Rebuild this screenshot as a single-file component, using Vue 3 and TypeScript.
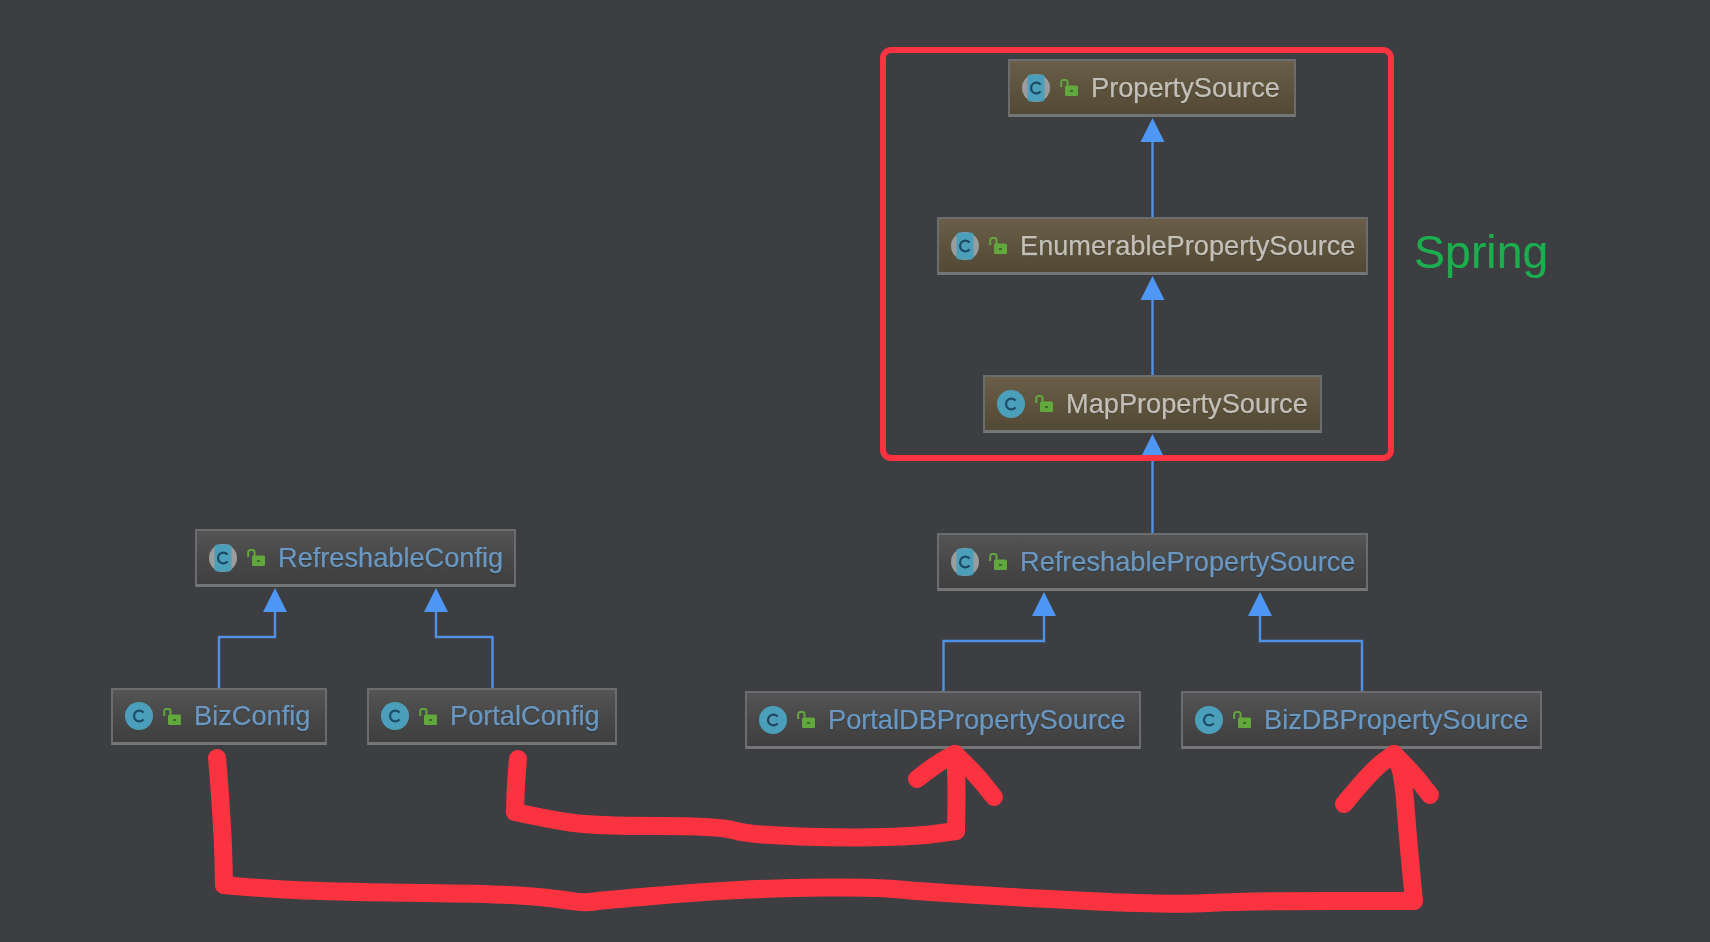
<script setup lang="ts">
interface DiagramNode {
  name: string
  x: number
  y: number
  w: number
  h: number
  abstract: boolean
  library: boolean
}

type Point = [number, number]

const nodes: DiagramNode[] = [
  { name: 'PropertySource', x: 1008, y: 59, w: 288, h: 58, abstract: true, library: true },
  { name: 'EnumerablePropertySource', x: 937, y: 217, w: 431, h: 58, abstract: true, library: true },
  { name: 'MapPropertySource', x: 983, y: 375, w: 339, h: 58, abstract: false, library: true },
  { name: 'RefreshablePropertySource', x: 937, y: 533, w: 431, h: 58, abstract: true, library: false },
  { name: 'RefreshableConfig', x: 195, y: 529, w: 321, h: 58, abstract: true, library: false },
  { name: 'BizConfig', x: 111, y: 688, w: 216, h: 57, abstract: false, library: false },
  { name: 'PortalConfig', x: 367, y: 688, w: 250, h: 57, abstract: false, library: false },
  { name: 'PortalDBPropertySource', x: 745, y: 691, w: 396, h: 58, abstract: false, library: false },
  { name: 'BizDBPropertySource', x: 1181, y: 691, w: 361, h: 58, abstract: false, library: false },
]

const edges: string[] = [
  'M1152.500 142V217',
  'M1152.500 300V375',
  'M1152.500 458V533',
  'M275 611V637H219V688',
  'M436 611V637H492.500V688',
  'M1044 616V641H943.500V691',
  'M1260 616V641H1362V691',
]

const arrows: Point[] = [
  [1152.500, 118],
  [1152.500, 276],
  [1152.500, 434],
  [275, 588],
  [436, 588],
  [1044, 592],
  [1260, 592],
]

const arrowPoints = (a: Point): string =>
  `${a[0]},${a[1]} ${a[0] - 12},${a[1] + 24} ${a[0] + 12},${a[1] + 24}`

const nodeBox = (n: DiagramNode) => ({
  left: `${n.x}px`,
  top: `${n.y}px`,
  width: `${n.w}px`,
  height: `${n.h}px`,
})

// Hand-drawn strokes: smooth between the sampled points, sharp only where one stroke ends.
const smooth = (pts: Point[]): string => {
  let d = `M${pts[0][0]} ${pts[0][1]}`
  for (let i = 1; i < pts.length - 1; i++) {
    const mx = (pts[i][0] + pts[i + 1][0]) / 2
    const my = (pts[i][1] + pts[i + 1][1]) / 2
    d += ` Q${pts[i][0]} ${pts[i][1]} ${mx} ${my}`
  }
  const last = pts[pts.length - 1]
  return `${d} L${last[0]} ${last[1]}`
}

const strokes: string[] = [
  smooth([[217, 758], [218.500, 773], [223, 840], [224, 885]]),
  smooth([
    [224, 885], [266, 889], [343, 892], [506, 894], [560, 899], [583, 903], [606, 900], [700, 892],
    [777, 888], [874, 887], [914, 891], [1008, 897], [1168, 905], [1249, 901], [1414, 901],
  ]),
  smooth([[1414, 901], [1408, 840], [1403, 773], [1394, 754]]),
  smooth([[1344, 804], [1372, 770], [1394, 754]]),
  smooth([[1394, 754], [1412, 772], [1430, 795]]),
  smooth([[518, 759], [516, 780], [515, 812]]),
  smooth([
    [515, 812], [547, 819], [593, 826], [720, 826], [749, 835], [853, 838], [920, 836], [956, 831],
  ]),
  smooth([[956, 831], [957, 790], [955, 754]]),
  smooth([[917, 779], [936, 764], [955, 754]]),
  smooth([[955, 754], [974, 772], [994, 797]]),
]
</script>

<template>
  <div class="canvas">
    <div
      v-for="n in nodes"
      :key="n.name"
      class="node"
      :class="{ library: n.library }"
      :style="nodeBox(n)"
    >
      <svg class="kind" viewBox="0 0 28 28" width="28" height="28">
        <template v-if="n.abstract">
          <circle cx="14" cy="14" r="14" fill="#9a9c9e" />
          <rect x="5.500" y="0.500" width="17" height="27" rx="3" fill="#4b9fba" />
        </template>
        <circle v-else cx="14" cy="14" r="14" fill="#4b9fba" />
        <path
          d="M18.600 10.600A5.400 5.400 0 1 0 18.600 17.400"
          fill="none"
          stroke="#1d4a62"
          stroke-width="2.200"
        />
      </svg>
      <svg class="lock" viewBox="0 0 18 17" width="18" height="17">
        <path d="M1.200 8V3A2 2 0 0 1 3.200 1H5.500A2 2 0 0 1 7.500 3V7" fill="none" stroke="#62a83c" stroke-width="2" />
        <rect x="5" y="6.500" width="13" height="10.500" rx="1.500" fill="#62a83c" />
        <rect x="10" y="11" width="3" height="2" fill="#3f6b2a" />
      </svg>
      <span class="label">{{ n.name }}</span>
    </div>

    <svg class="overlay" viewBox="0 0 1710 942" width="1710" height="942">
      <g class="edges">
        <path v-for="e in edges" :key="e" :d="e" />
      </g>
      <polygon v-for="a in arrows" :key="a[0] + '-' + a[1]" class="arrow" :points="arrowPoints(a)" />
      <rect class="frame" x="883" y="50" width="508" height="408" rx="8" />
      <path v-for="(s, i) in strokes" :key="i" class="ink" :d="s" />
    </svg>

    <span class="note">Spring</span>
  </div>
</template>

<style scoped>
.canvas {
  position: relative;
  width: 1710px;
  height: 942px;
  overflow: hidden;
  background: #3c3e41;
  font-family: "Liberation Sans", Arial, sans-serif;
}

.node {
  position: absolute;
  box-sizing: border-box;
  display: flex;
  align-items: center;
  padding: 0 0 0 12px;
  border: 2px solid #6b6c6d;
  border-bottom: 3px solid #747576;
  background: linear-gradient(#545454 0%, #484848 50%, #3f3f3f 100%);
  filter: blur(0.4px);
}

.node.library {
  background: linear-gradient(#6a5e49 0%, #5e533c 50%, #524936 100%);
}

.kind {
  flex: none;
  margin-right: 10px;
}

.lock {
  flex: none;
  margin-right: 13px;
}

.label {
  font-size: 27.200px;
  line-height: 1;
  white-space: nowrap;
  color: #6a98c2;
  -webkit-text-stroke: 0.250px currentColor;
  text-shadow: 0 1px 1px rgba(0, 0, 0, 0.35);
}

.node.library .label {
  color: #c3c0b9;
}

.overlay {
  position: absolute;
  left: 0;
  top: 0;
  pointer-events: none;
}

.edges path {
  fill: none;
  stroke: #4f91e6;
  stroke-width: 2.400;
}

.arrow {
  fill: #4f97f5;
}

.frame {
  fill: none;
  stroke: #fb3341;
  stroke-width: 6;
}

.ink {
  fill: none;
  stroke: #fb3341;
  stroke-width: 18;
  stroke-linecap: round;
  stroke-linejoin: round;
}

.note {
  position: absolute;
  left: 1414px;
  top: 225px;
  font-size: 46.500px;
  line-height: 54px;
  color: #1bae4e;
}
</style>
